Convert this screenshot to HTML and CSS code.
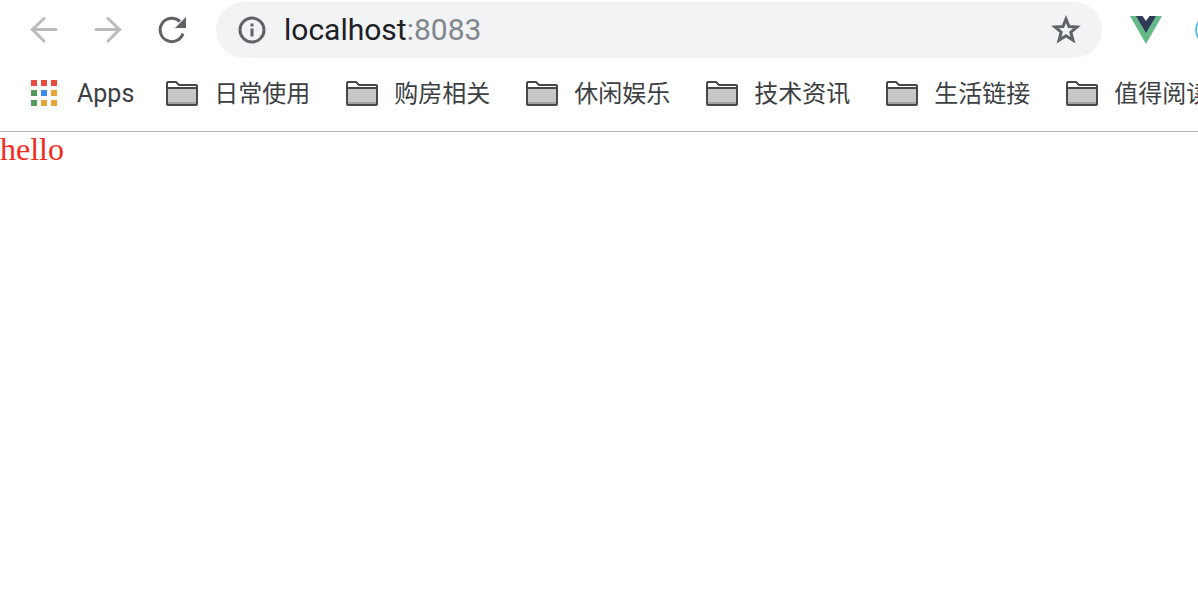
FILE: index.html
```
<!DOCTYPE html>
<html lang="zh-CN">
<head>
<meta charset="utf-8">
<title>localhost:8083</title>
<link rel="stylesheet" href="styles.css">
</head>
<body>
<header class="browser">
  <div class="toolbar">
    <nav class="navigation" aria-label="Navigation">
      <button class="icon-button muted" type="button" aria-label="Back">
        <svg viewBox="0 0 32 32"><path d="M28 15.500H4M16 4.500L4.500 15.500 16 27"/></svg>
      </button>
      <button class="icon-button muted" type="button" aria-label="Forward">
        <svg viewBox="0 0 32 32"><path d="M4 15.500H28M16 4.500L27.500 15.500 16 27"/></svg>
      </button>
      <button class="icon-button" type="button" aria-label="Reload">
        <svg viewBox="0 0 32 32"><path d="M27 19.500A11.700 11.700 0 1 1 24 7.500"/><path class="solid" d="M30 3V14H19z"/></svg>
      </button>
    </nav>
    <div class="omnibox">
      <button class="site-info" type="button" aria-label="Site information">
        <svg viewBox="0 0 32 32"><circle cx="16" cy="16" r="12"/><path class="solid" d="M14.500 9.500h3v3h-3zM14.500 14.500h3v8h-3z"/></svg>
      </button>
      <a class="url" href="#">localhost<span class="port">:8083</span></a>
      <button class="bookmark-star" type="button" aria-label="Bookmark this page">
        <svg viewBox="0 0 32 32"><path d="M16 5L19 12.500 27 13 20.800 18.200 23 26.200 16 21.800 9 26.200 11.200 18.200 5 13 13 12.500Z"/></svg>
      </button>
    </div>
    <div class="extensions">
      <button class="extension" type="button" aria-label="Vue devtools">
        <svg viewBox="0 0 32 32"><path fill="#65b987" d="M0 2H32L16 30z"/><path fill="#2f3b56" d="M6 2H26L16 19z"/><path fill="#fff" d="M12.500 2H19.500L16 7z"/></svg>
      </button>
      <button class="extension" type="button" aria-label="Extension">
        <svg viewBox="0 0 32 32"><circle cx="16" cy="16" r="14" fill="none" stroke="#58b9f5" stroke-width="2"/></svg>
      </button>
    </div>
  </div>
  <nav class="bookmarks" aria-label="Bookmarks">
    <a class="bookmark apps" href="#">
      <svg class="apps-icon" viewBox="0 0 26 26"><path fill="#e64a3c" d="M0 0h6v6H0zM10 0h6v6h-6zM20 0h6v6h-6z"/><path fill="#529b5d" d="M0 10h6v6H0zM0 20h6v6H0z"/><path fill="#3d8af0" d="M10 10h6v6h-6z"/><path fill="#e7a538" d="M20 10h6v6h-6zM10 20h6v6h-6zM20 20h6v6h-6z"/></svg>
      <span class="label">Apps</span>
    </a>
    <a class="bookmark" href="#"><svg class="folder" viewBox="0 0 32 26"><use href="#folder"/></svg><span class="label">日常使用</span></a>
    <a class="bookmark" href="#"><svg class="folder" viewBox="0 0 32 26"><use href="#folder"/></svg><span class="label">购房相关</span></a>
    <a class="bookmark" href="#"><svg class="folder" viewBox="0 0 32 26"><use href="#folder"/></svg><span class="label">休闲娱乐</span></a>
    <a class="bookmark" href="#"><svg class="folder" viewBox="0 0 32 26"><use href="#folder"/></svg><span class="label">技术资讯</span></a>
    <a class="bookmark" href="#"><svg class="folder" viewBox="0 0 32 26"><use href="#folder"/></svg><span class="label">生活链接</span></a>
    <a class="bookmark" href="#"><svg class="folder" viewBox="0 0 32 26"><use href="#folder"/></svg><span class="label">值得阅读</span></a>
  </nav>
</header>
<main class="page">hello</main>
<svg class="symbols" aria-hidden="true">
  <symbol id="folder" viewBox="0 0 32 26">
    <path fill="#fff" d="M1 2H10L13 5H31V9H1z"/>
    <path fill="#c7c7c7" d="M1 9H31V24H1z"/>
    <path fill="#a3a3a3" d="M1 22H31V24H1z"/>
    <path fill="none" stroke="#484848" stroke-width="2" stroke-linejoin="round" d="M1 8V3Q1 2 2 2H10L13 5H30Q31 5 31 6V24Q31 25 30 25H2Q1 25 1 24V8H31"/>
  </symbol>
</svg>
</body>
</html>
```
FILE: styles.css
```
* {
  box-sizing: border-box;
}

body {
  margin: 0;
  background: #fff;
  overflow-x: hidden;
}

button {
  display: flex;
  flex: none;
  margin: 0;
  padding: 0;
  border: 0;
  background: none;
  color: inherit;
}

svg {
  display: block;
  flex: none;
}

.browser {
  overflow: hidden;
  border-bottom: 1px solid #b4b6b5;
  font-family: Roboto, "Noto Sans CJK SC", sans-serif;
}

.toolbar {
  display: flex;
  align-items: center;
  padding: 2px 0 0 28px;
}

.navigation {
  display: flex;
  gap: 32px;
  margin-right: 28px;
  color: #5f6368;
}

.icon-button svg,
.site-info svg,
.bookmark-star svg,
.extension svg {
  width: 32px;
  height: 32px;
}

.icon-button path,
.site-info circle,
.bookmark-star path {
  fill: none;
  stroke: currentColor;
  stroke-width: 3;
}

.icon-button .solid,
.site-info .solid {
  fill: currentColor;
  stroke: none;
}

.muted {
  color: #b9bbbd;
}

.muted path {
  stroke-linecap: round;
}

.omnibox {
  display: flex;
  flex: 1;
  align-items: center;
  min-width: 0;
  height: 56px;
  padding: 0 20px;
  border-radius: 28px;
  background: #f1f3f4;
  color: #5f6368;
}

.url {
  flex: 1;
  min-width: 0;
  margin-left: 16px;
  color: #202124;
  font-size: 30px;
  line-height: 32px;
  text-decoration: none;
}

.port {
  color: #80868b;
}

.extensions {
  display: flex;
  flex: none;
  gap: 32px;
  width: 96px;
  padding-left: 28px;
}

.bookmarks {
  display: flex;
  align-items: center;
  gap: 36px;
  height: 73px;
  padding: 0 0 4px 31px;
}

.bookmark {
  display: flex;
  flex: none;
  align-items: center;
  gap: 16px;
  color: #3c4043;
  font-size: 24px;
  line-height: 32px;
  text-decoration: none;
  white-space: nowrap;
}

.label {
  padding-top: 2px;
}

.apps {
  gap: 20px;
  margin-right: -4px;
  font-size: 25px;
}

.apps-icon {
  width: 26px;
  height: 26px;
}

.folder {
  width: 32px;
  height: 26px;
}

.page {
  color: #f02d20;
  font-family: "Liberation Serif", serif;
  font-size: 32px;
  line-height: 34px;
}

.symbols {
  position: absolute;
  width: 0;
  height: 0;
}
```
